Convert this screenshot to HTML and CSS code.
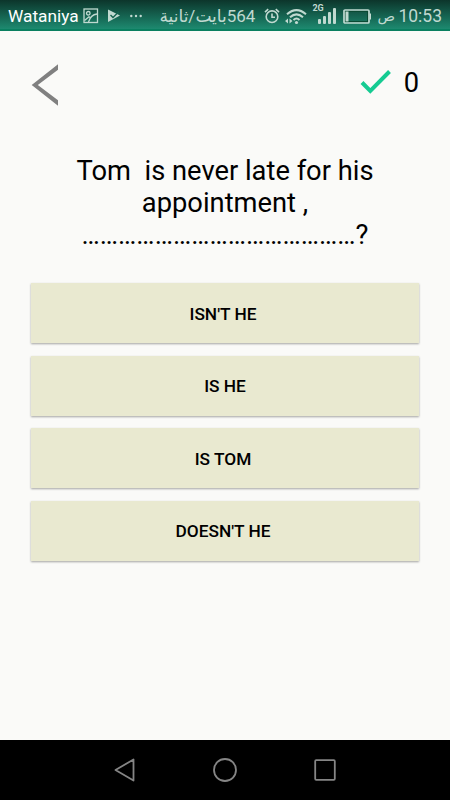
FILE: index.html
```
<!DOCTYPE html>
<html lang="en">
<head>
  <meta charset="UTF-8">
  <meta name="viewport" content="width=device-width, initial-scale=1.0">
  <title>Quiz</title>
  <link rel="stylesheet" href="styles.css">
</head>
<body>
  <div class="screen">
    <!-- status bar -->
    <div class="status">
      <span class="carrier">Wataniya</span>
      <svg class="ic-picture" width="16" height="16" viewBox="0 0 16 16" fill="none" stroke="currentColor" stroke-width="1.3">
        <rect x="1" y="1" width="13.5" height="13.5"/>
        <circle cx="5.3" cy="5.3" r="1.8"/>
        <path d="M1.5 12.5L6 8.8l2 1.2M5.5 14C7 9 10 6.5 14 6"/>
      </svg>
      <svg class="ic-play" width="14" height="14" viewBox="0 0 14 14">
        <path d="M1 .5L13 6.5 1 13Z" fill="currentColor"/>
        <path d="M3.5 6l2.5 2.5L12 2.5" fill="none" stroke="#14624f" stroke-width="1.4"/>
      </svg>
      <svg class="ic-more" width="12" height="4" viewBox="0 0 12 4" fill="currentColor">
        <circle cx="1.3" cy="2" r="1.2"/><circle cx="6" cy="2" r="1.2"/><circle cx="10.7" cy="2" r="1.2"/>
      </svg>
      <div class="status-right">
        <span class="speed" dir="rtl">564بايت/ثانية</span>
        <svg class="ic-alarm" width="16" height="16" viewBox="0 0 16 16" fill="none" stroke="currentColor" stroke-width="1.6">
          <circle cx="8" cy="8.7" r="5.8"/>
          <path d="M8 5.5v3.7h3M1 4.2L4.2 1.2M15 4.2L11.8 1.2"/>
        </svg>
        <svg class="ic-wifi" width="22" height="17" viewBox="0 0 22 17" fill="none" stroke="currentColor" stroke-width="2">
          <path d="M2 6.2Q11.5-2 21 6.2M5 9.2Q11.5 3.5 18 9.2M8.5 12Q11.5 9 14.5 12"/>
          <circle cx="11.5" cy="14.5" r="1.6" fill="currentColor" stroke="none"/>
          <path d="M0 13l3-2.5v5ZM7.5 13l-3-2.5v5Z" fill="currentColor" stroke="none"/>
        </svg>
        <div class="signal">
          <span class="net">2G</span>
          <svg width="19" height="16" viewBox="0 0 19 16" fill="currentColor">
            <rect x="0" y="11" width="3" height="5" rx="1"/><rect x="5" y="8" width="3" height="8" rx="1"/>
            <rect x="10" y="4" width="3" height="12" rx="1"/><rect x="15" y="0" width="3" height="16" rx="1"/>
          </svg>
        </div>
        <svg class="ic-battery" width="29" height="15" viewBox="0 0 29 15">
          <rect x="1" y="1" width="25" height="13" rx="1" fill="none" stroke="currentColor" stroke-width="1.7"/>
          <rect x="2.5" y="2.5" width="22" height="10" fill="none" stroke="#0a4a33" stroke-width="1"/>
          <rect x="2.5" y="2.5" width="3" height="10" fill="currentColor"/>
          <rect x="26.5" y="4.5" width="1.5" height="6" fill="currentColor"/>
        </svg>
        <span class="period">ص</span>
        <span class="time">10:53</span>
      </div>
    </div>

    <!-- back + score -->
    <div class="header">
      <svg class="back" width="29" height="42" viewBox="0 0 29 42">
        <path d="M27 .3V5.7L6.8 21 27 36.3V41.7L.7 21Z" fill="#808080"/>
      </svg>
      <div class="score">
        <svg width="32" height="26" viewBox="0 0 32 26" fill="none" stroke="#15cb92" stroke-width="4">
          <path d="M2 13.5l8.3 8.5L29.5 2.5"/>
        </svg>
        <span>0</span>
      </div>
    </div>

    <div class="question">Tom&nbsp; is never late for his<br>appointment ,<br>&hellip;&hellip;&hellip;&hellip;&hellip;&hellip;&hellip;&hellip;&hellip;&hellip;&hellip;&hellip;&hellip;&hellip;&hellip;?</div>

    <div class="answers">
      <button class="answer">ISN'T HE</button>
      <button class="answer centered">IS HE</button>
      <button class="answer">IS TOM</button>
      <button class="answer">DOESN'T HE</button>
    </div>

    <!-- android navigation -->
    <div class="nav">
      <svg width="26" height="26" viewBox="0 0 26 26"><path d="M21.5 2.5v21L3.5 13Z"/></svg>
      <svg width="26" height="26" viewBox="0 0 26 26"><circle cx="13" cy="13" r="11"/></svg>
      <svg width="26" height="26" viewBox="0 0 26 26"><rect x="3.2" y="3.2" width="19.6" height="19.6" rx="1"/></svg>
    </div>
  </div>
</body>
</html>
```
FILE: styles.css
```
*{
  box-sizing: border-box;
}
body{
  margin: 0;
  font-family: Roboto, "Noto Sans", "DejaVu Sans", sans-serif;
  color: #000;
}
.screen{
  width: 450px;
  height: 800px;
  display: flex;
  flex-direction: column;
  background-color: #fafaf8;
  overflow: hidden;
}
.status{
  height: 31px;
  flex: none;
  display: flex;
  align-items: center;
  padding: 1px 8px 0;
  color: #c0d9d0;
  background: linear-gradient(#0c352b, #1d8a70 94%, #0a7f60 94%);
  white-space: nowrap;
}
.carrier{
  width: 75px;
  font-size: 17.3px;
  color: #fff;
}
.ic-play{
  margin-left: 8px;
}
.ic-more{
  margin-left: 9px;
}
.status-right{
  margin-left: auto;
  display: flex;
  align-items: center;
}
.speed{
  font-size: 17px;
}
.ic-alarm{
  margin-left: 9px;
}
.ic-wifi{
  margin-left: 5px;
}
.signal{
  position: relative;
  width: 19px;
  height: 16px;
  margin-left: 11px;
}
.net{
  position: absolute;
  left: -6px;
  top: -4px;
  font-size: 9px;
  line-height: 9px;
  font-weight: bold;
}
.ic-battery{
  margin-left: 6px;
}
.period{
  width: 18px;
  margin-left: 5px;
  font-size: 14.5px;
}
.time{
  margin-left: 3px;
  font-size: 17.5px;
}
.header{
  display: flex;
  justify-content: space-between;
  padding: 33px 31px 0;
  height: 124px;
}
.score{
  display: flex;
  align-items: center;
  gap: 12px;
  height: 38px;
  font-size: 27.3px;
}
.score svg{
  margin-bottom: 2px;
}
.question{
  height: 128px;
  font-size: 27.3px;
  line-height: 32px;
  text-align: center;
}
.answers{
  display: flex;
  flex-direction: column;
  gap: 12.5px;
  padding: 0 31px;
}
.answer{
  height: 60px;
  padding: 1px 4px 0 0;
  border: 0;
  background-color: #e9e9d0;
  box-shadow: 0 1px 2px rgba(0, 0, 0, .35);
  font-family: Roboto, sans-serif;
  font-size: 17.3px;
  font-weight: 500;
  color: #000;
}
.answer.centered{
  padding-right: 0;
}
.nav{
  margin-top: auto;
  height: 60px;
  flex: none;
  display: flex;
  justify-content: center;
  align-items: center;
  gap: 74px;
  background-color: #000;
}
.nav svg{
  fill: none;
  stroke: #858585;
  stroke-width: 1.8;
  stroke-linejoin: round;
}
```
